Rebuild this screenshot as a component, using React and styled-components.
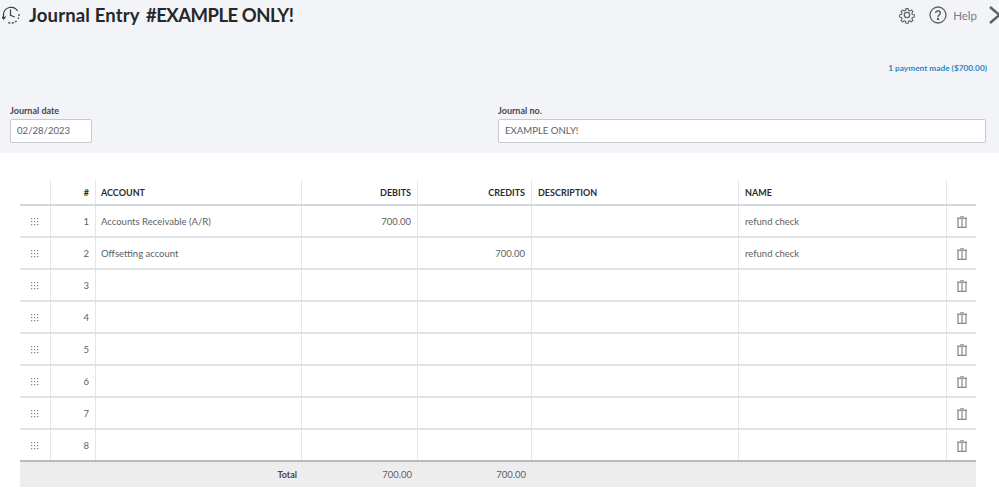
import React from 'react'
import styled, { createGlobalStyle } from 'styled-components'

const GlobalStyle = createGlobalStyle`
  html, body {
    margin: 0;
    background: #fff;
    font-family: Lato, "Noto Sans", sans-serif;
    overflow: hidden;
  }
`

const COLUMNS = '31px 45px 206px 116px 114px 207px 208px 29px'

//---------- header ----------

const Head = styled.header`
  height: 153px;
  box-sizing: border-box;
  background: #f3f4f8;
  display: flex;
  flex-direction: column;
`

const TopBar = styled.div`
  height: 30px;
  display: flex;
  align-items: center;
  padding-left: 2px;
`

const Title = styled.h1`
  margin: 0 0 0 9px;
  font-size: 18.5px;
  font-weight: 700;
  color: #26272b;
  letter-spacing: 0.15px;
`

const TitleNumber = styled.span`
  margin-left: 2px;
  letter-spacing: -0.5px;
`

const Tools = styled.div`
  margin-left: auto;
  margin-right: -2px;
  display: flex;
  align-items: center;
  color: #5f6168;
`

const HelpLabel = styled.span`
  font-size: 11.5px;
  color: #7b7d83;
  margin: 0 12px 0 6px;
`

const PaymentRow = styled.div`
  display: flex;
  justify-content: flex-end;
  padding: 32px 12px 0 0;
`

const PaymentLink = styled.a`
  font-size: 8.3px;
  line-height: 12px;
  font-weight: 700;
  color: #2b86c5;
`

const Fields = styled.div`
  display: grid;
  grid-template-columns: 82px 488px;
  justify-content: space-between;
  padding: 31px 13px 0 10px;
`

const Field = styled.label`
  display: flex;
  flex-direction: column;
  gap: 2px;
  font-size: 9px;
  line-height: 12px;
  font-weight: 700;
  color: #45474d;
`

const Input = styled.div`
  height: 24px;
  box-sizing: border-box;
  border: 1px solid #c6c9cf;
  border-radius: 2px;
  background: #fff;
  padding-left: 6px;
  font-size: 9.6px;
  font-weight: 400;
  line-height: 22px;
  color: #5e6066;
`

//---------- table ----------

const Table = styled.section`
  margin: 27px 23px 0 20px;
`

const Row = styled.div`
  display: grid;
  grid-template-columns: ${COLUMNS};
  height: ${({ $head }) => ($head ? '26px' : '32px')};
  box-sizing: border-box;
  border-bottom: ${({ $head, $last }) =>
    $head ? '2px solid #d5d8df' : $last ? '2px solid #b9bbbe' : '2px solid #e2e3e5'};
`

const Cell = styled.div`
  display: flex;
  align-items: center;
  justify-content: ${({ $right, $center }) =>
    $right ? 'flex-end' : $center ? 'center' : 'flex-start'};
  padding: 0 6px 0 ${({ $tight }) => ($tight ? '5px' : '6px')};
  min-width: 0;
  white-space: nowrap;
  font-size: ${({ $head }) => ($head ? '9px' : '9.5px')};
  color: ${({ $head }) => ($head ? '#2c2d31' : '#5e6066')};
  font-weight: ${({ $head }) => ($head ? 700 : 400)};
  border-right: ${({ $end }) => ($end ? 'none' : '1px solid #e5e6e8')};
`

const TotalRow = styled.div`
  display: grid;
  grid-template-columns: ${COLUMNS};
  height: 25px;
  background: #ededee;
`

const TotalLabel = styled.div`
  grid-column: 1 / 4;
  display: flex;
  align-items: center;
  justify-content: flex-end;
  padding-right: 5px;
  font-size: 9px;
  font-weight: 700;
  color: #45474d;
`

const TotalValue = styled.div`
  display: flex;
  align-items: center;
  justify-content: flex-end;
  padding-right: 6px;
  font-size: 9.5px;
  color: #5e6066;
`

const RowIcon = styled.svg`
  margin-top: 1px;
`

//---------- icons ----------

const HistoryIcon = () => (
  <svg width="18" height="18" viewBox="0 0 18 18" fill="none" stroke="#3a3b40" strokeWidth="1.2">
    <path d="M1.4 8A7.8 7.8 0 0 1 15.6 4.8" />
    <path d="M17 8a8 8 0 0 1-1 5" strokeDasharray="2 1.4" />
    <path d="M14.6 14.8a8 8 0 0 1-9 1.6" strokeDasharray="2 1.4" />
    <path d="M8.5 3.4v6l4.2 1.6" />
    <path d="M-.4 10.6l1.9 2.4 2.1-2.4M1.5 8v4.5" />
  </svg>
)

const GearIcon = () => (
  <svg width="18" height="18" viewBox="0 0 24 24" fill="none" stroke="currentColor" strokeWidth="1.6" strokeLinejoin="round">
    <path d="M10.3 2.5h3.4l.5 2.9 1.9.8 2.4-1.7 2.4 2.4-1.7 2.4.8 1.9 2.9.5v3.4l-2.9.5-.8 1.9 1.7 2.4-2.4 2.4-2.4-1.7-1.9.8-.5 2.9h-3.4l-.5-2.9-1.9-.8-2.4 1.7-2.4-2.4 1.7-2.4-.8-1.9-2.9-.5v-3.4l2.9-.5.8-1.9-1.7-2.4 2.4-2.4 2.4 1.7 1.9-.8z" transform="translate(1.2 1.2) scale(.9)" />
    <circle cx="12" cy="12" r="3.6" />
  </svg>
)

const HelpIcon = () => (
  <svg width="18" height="18" viewBox="0 0 18 18" fill="none" stroke="currentColor" strokeWidth="1.3" style={{ marginLeft: 13 }}>
    <circle cx="9" cy="9" r="8" />
    <path d="M6.7 7a2.3 2.3 0 1 1 3.6 1.9c-.9.6-1.3 1-1.3 2" strokeWidth="1.5" />
    <circle cx="9" cy="13" r=".6" fill="currentColor" />
  </svg>
)

const ChevronIcon = () => (
  <svg width="12" height="18" viewBox="0 0 12 18" fill="none" stroke="#5f6168" strokeWidth="2.6">
    <path d="M1 1L10.5 9 1 17" />
  </svg>
)

const GripIcon = () => (
  <RowIcon width="8" height="8" viewBox="0 0 8 8" fill="#8a8c91">
    {[0, 3, 6].map((y) =>
      [0, 3, 6].map((x) => <rect key={`${x}-${y}`} x={x} y={y} width="1.3" height="1.3" />)
    )}
  </RowIcon>
)

const TrashIcon = () => (
  <RowIcon width="10" height="12" viewBox="0 0 10 12" fill="none" stroke="#85878b">
    <path d="M0 2.2h10" strokeWidth="1.3" />
    <path d="M3.5 1.4V.6h3v.8" strokeWidth=".9" />
    <path d="M1 2.5V11.4h8V2.5" strokeWidth="1.2" />
    <path d="M5 3v8" strokeWidth="1.2" />
  </RowIcon>
)

//---------- data ----------

const lines = [
  { account: 'Accounts Receivable (A/R)', debit: '700.00', name: 'refund check' },
  { account: 'Offsetting account', credit: '700.00', name: 'refund check' },
  {}, {}, {}, {}, {}, {},
]

export default function App() {
  return (
    <>
      <GlobalStyle />
      <Head>
        <TopBar>
          <HistoryIcon />
          <Title>Journal Entry <TitleNumber>#EXAMPLE ONLY!</TitleNumber></Title>
          <Tools>
            <GearIcon />
            <HelpIcon />
            <HelpLabel>Help</HelpLabel>
            <ChevronIcon />
          </Tools>
        </TopBar>
        <PaymentRow>
          <PaymentLink>1 payment made ($700.00)</PaymentLink>
        </PaymentRow>
        <Fields>
          <Field>
            Journal date
            <Input>02/28/2023</Input>
          </Field>
          <Field>
            Journal no.
            <Input>EXAMPLE ONLY!</Input>
          </Field>
        </Fields>
      </Head>
      <Table>
        <Row $head>
          <Cell $head />
          <Cell $head $right>#</Cell>
          <Cell $head $tight>ACCOUNT</Cell>
          <Cell $head $right>DEBITS</Cell>
          <Cell $head $right>CREDITS</Cell>
          <Cell $head>DESCRIPTION</Cell>
          <Cell $head>NAME</Cell>
          <Cell $head $end />
        </Row>
        {lines.map((line, i) => (
          <Row key={i} $last={i === lines.length - 1}>
            <Cell $center><GripIcon /></Cell>
            <Cell $right>{i + 1}</Cell>
            <Cell $tight>{line.account}</Cell>
            <Cell $right>{line.debit}</Cell>
            <Cell $right>{line.credit}</Cell>
            <Cell />
            <Cell>{line.name}</Cell>
            <Cell $center $end><TrashIcon /></Cell>
          </Row>
        ))}
        <TotalRow>
          <TotalLabel>Total</TotalLabel>
          <TotalValue>700.00</TotalValue>
          <TotalValue>700.00</TotalValue>
        </TotalRow>
      </Table>
    </>
  )
}
